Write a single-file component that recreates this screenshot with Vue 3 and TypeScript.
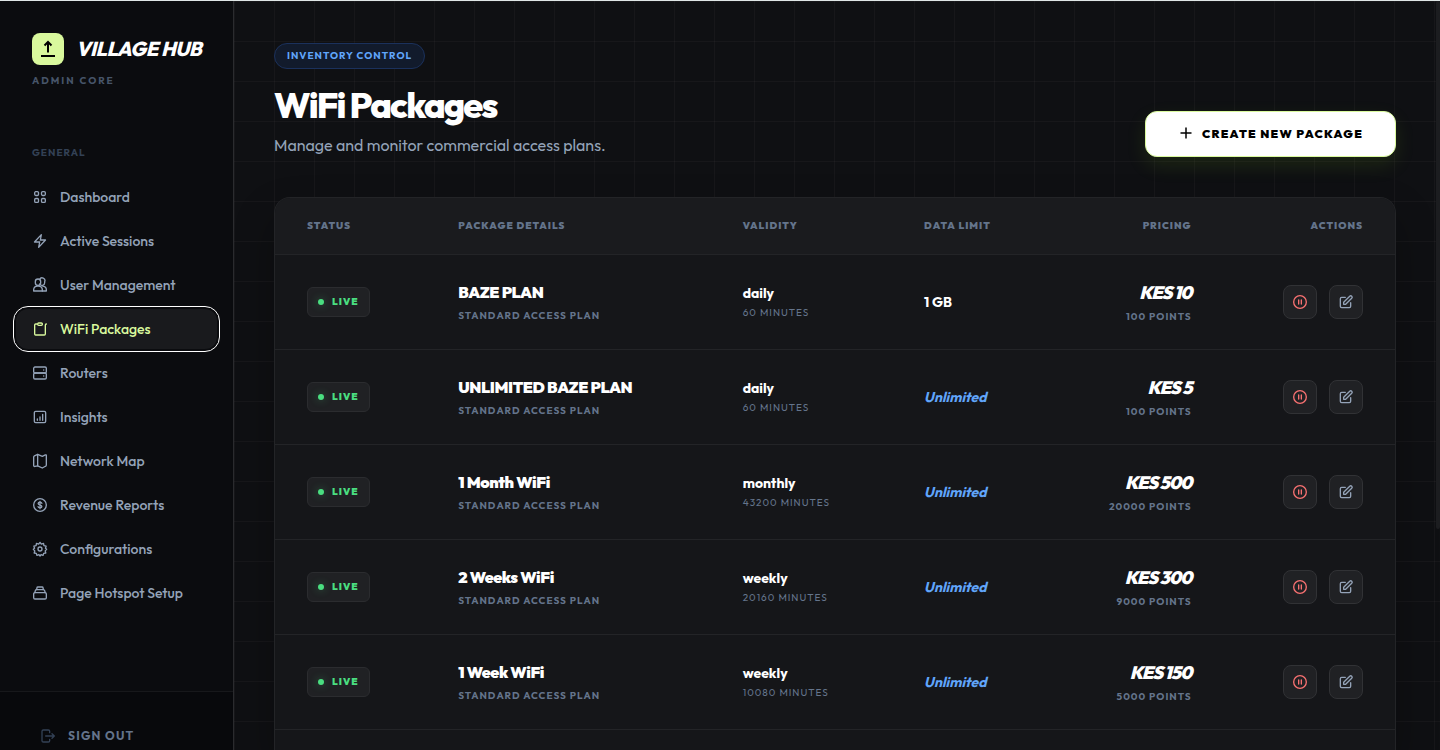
<script setup lang="ts">
interface NavItem {
  label: string
  icon: string[]
  active?: boolean
}

interface Package {
  name: string
  validity: string
  minutes: number
  limit: string | null
  price: number
  points: number
}

const navItems: NavItem[] = [
  {
    label: 'Dashboard',
    icon: [
      'M5.25 4H7.75A1.750 1.750 0 0 1 9.750 6V8A1.750 1.750 0 0 1 7.750 9.750H5.750A1.750 1.750 0 0 1 4 8V6A1.750 1.750 0 0 1 5.750 4z',
      'M16 4H18.250A1.750 1.750 0 0 1 20 5.750V8A1.750 1.750 0 0 1 18.250 9.750H16A1.750 1.750 0 0 1 14.250 8V5.750A1.750 1.750 0 0 1 16 4z',
      'M5.750 14.250H8A1.750 1.750 0 0 1 9.750 16V18.250A1.750 1.750 0 0 1 8 20H5.750A1.750 1.750 0 0 1 4 18.250V16A1.750 1.750 0 0 1 5.750 14.250z',
      'M16 14.250H18.250A1.750 1.750 0 0 1 20 16V18.250A1.750 1.750 0 0 1 18.250 20H16A1.750 1.750 0 0 1 14.250 18.250V16A1.750 1.750 0 0 1 16 14.250z',
    ],
  },
  {
    label: 'Active Sessions',
    icon: ['M3.75 13.5 14 2.500 12.500 10.500h7.750L10 21.500 11.500 13.500H3.750z'],
  },
  {
    label: 'User Management',
    icon: [
      'M9 3a4 4 0 0 1 4 4v1.500a4 4 0 0 1-8 0V7a4 4 0 0 1 4-4z',
      'M11.500 3.800A4 4 0 0 1 19 7v1.500a4 4 0 0 1-7.500 2',
      'M2.500 21v-1.800c0-3.200 2.600-5.400 6.500-5.400s6.500 2.200 6.500 5.400V21z',
      'M16 13.800c3.400.4 5.500 2.500 5.500 5.400V21h-6',
    ],
  },
  {
    label: 'WiFi Packages',
    active: true,
    icon: [
      'M7.500 4.500H5.500A1.500 1.500 0 0 0 4 6v13.500A1.500 1.500 0 0 0 5.500 21h13a1.500 1.500 0 0 0 1.500-1.500V6.500c0-1.200.4-2 1.500-2',
      'M10 3h4a1.500 1.500 0 0 1 1.500 1.500v.5A1.500 1.500 0 0 1 14 6.500h-4A1.500 1.500 0 0 1 8.500 5v-.5A1.500 1.500 0 0 1 10 3z',
    ],
  },
  {
    label: 'Routers',
    icon: [
      'M4.500 3h15a2 2 0 0 1 2 2v5a2 2 0 0 1-2 2h-15a2 2 0 0 1-2-2V5a2 2 0 0 1 2-2z',
      'M4.500 12h15a2 2 0 0 1 2 2v5a2 2 0 0 1-2 2h-15a2 2 0 0 1-2-2v-5a2 2 0 0 1 2-2z',
      'M17.500 7.500h.1M17.500 16.500h.1',
    ],
  },
  {
    label: 'Insights',
    icon: [
      'M5.500 3.500h13a2 2 0 0 1 2 2v13a2 2 0 0 1-2 2h-13a2 2 0 0 1-2-2v-13a2 2 0 0 1 2-2z',
      'M8 15v2M12 12V17M16 8V17',
    ],
  },
  {
    label: 'Network Map',
    icon: [
      'M8.500 2v17',
      'M8.500 2l7 3 4.500-2.200c.8-.3 1.500.1 1.500.9v14.300a2 2 0 0 1-1.400 1.900L15.500 22.500l-7-3.300-4 1c-1.200.3-2-.4-2-1.500V6a2 2 0 0 1 1.200-1.800z',
    ],
  },
  {
    label: 'Revenue Reports',
    icon: [
      'M21.500 12a9.500 9.500 0 1 1-19 0 9.500 9.500 0 0 1 19 0z',
      'M14.800 9.500c-.3-1-1.300-1.600-2.800-1.600s-2.800.8-2.800 2c0 3 5.600 1.300 5.600 4.200 0 1.200-1.200 2-2.800 2-1.500 0-2.600-.6-2.900-1.700M12 6.500v11',
    ],
  },
  {
    label: 'Configurations',
    icon: [
      'M12 2l2 2.700 3.300-1 .6 3.300 3.300.7-1 3.200L22 12.500l-2.200 2.300.9 3.200-3.200.5-.9 3.100-3-1.300L12 22.500l-1.600-2.200-3 1.300-.9-3.100-3.200-.5.9-3.200L2 12.500l1.800-1.600-1-3.200L6.100 7l.6-3.300 3.300 1z',
      'M12 9a3 3 0 1 1 0 6 3 3 0 0 1 0-6z',
    ],
  },
  {
    label: 'Page Hotspot Setup',
    icon: [
      'M4.500 11.500h15a2 2 0 0 1 2 2V19a2 2 0 0 1-2 2h-15a2 2 0 0 1-2-2v-5.500a2 2 0 0 1 2-2z',
      'M4.200 11.500l.8-3A2 2 0 0 1 7 7h10a2 2 0 0 1 2 1.500l.8 3',
      'M7 7l.4-2.700A1.500 1.500 0 0 1 8.900 3h6.200a1.500 1.500 0 0 1 1.500 1.300L17 7',
    ],
  },
]

const packages: Package[] = [
  { name: 'BAZE PLAN', validity: 'daily', minutes: 60, limit: '1 GB', price: 10, points: 100 },
  { name: 'UNLIMITED BAZE PLAN', validity: 'daily', minutes: 60, limit: null, price: 5, points: 100 },
  { name: '1 Month WiFi', validity: 'monthly', minutes: 43200, limit: null, price: 500, points: 20000 },
  { name: '2 Weeks WiFi', validity: 'weekly', minutes: 20160, limit: null, price: 300, points: 9000 },
  { name: '1 Week WiFi', validity: 'weekly', minutes: 10080, limit: null, price: 150, points: 5000 },
]
</script>

<template>
  <div class="shell">
    <aside class="sidebar">
      <div class="brand">
        <div class="brand-row">
          <span class="logo">
            <svg viewBox="0 0 20 20" width="20" height="20" aria-hidden="true">
              <path d="M10 13.500V3.500M6.500 6.500 10 3l3.500 3.500M3 17h14" />
            </svg>
          </span>
          <span class="brand-name">VILLAGE HUB</span>
        </div>
        <div class="brand-sub">ADMIN CORE</div>
      </div>

      <nav class="nav">
        <div class="nav-title">GENERAL</div>
        <a v-for="item in navItems" :key="item.label" href="#" class="nav-item" :class="{ active: item.active }">
          <svg class="icon" viewBox="0 0 24 24" aria-hidden="true">
            <path v-for="d in item.icon" :key="d" :d="d" />
          </svg>
          {{ item.label }}
        </a>
      </nav>

      <div class="sidebar-foot">
        <button type="button" class="sign-out">
          <svg class="icon" viewBox="0 0 24 24" aria-hidden="true">
            <path d="M14.500 7V5a2 2 0 0 0-2-2H5a2 2 0 0 0-2 2v14a2 2 0 0 0 2 2h7.500a2 2 0 0 0 2-2v-2M8.500 12h13M18 8.500l3.500 3.500-3.500 3.500" />
          </svg>
          SIGN OUT
        </button>
      </div>
    </aside>

    <main class="main">
      <header class="page-head">
        <div class="intro">
          <span class="pill">INVENTORY CONTROL</span>
          <h1>WiFi Packages</h1>
          <p>Manage and monitor commercial access plans.</p>
        </div>
        <button type="button" class="create">
          <svg viewBox="0 0 16 16" width="16" height="16" aria-hidden="true"><path d="M8 2.500v11M2.500 8h11" /></svg>
          CREATE NEW PACKAGE
        </button>
      </header>

      <section class="card">
        <table>
          <colgroup>
            <col class="c-status" />
            <col class="c-name" />
            <col class="c-validity" />
            <col class="c-limit" />
            <col class="c-price" />
            <col class="c-actions" />
          </colgroup>
          <thead>
            <tr>
              <th>STATUS</th>
              <th>PACKAGE DETAILS</th>
              <th>VALIDITY</th>
              <th>DATA LIMIT</th>
              <th class="right">PRICING</th>
              <th class="right">ACTIONS</th>
            </tr>
          </thead>
          <tbody>
            <tr v-for="p in packages" :key="p.name">
              <td><span class="live"><i class="dot"></i>LIVE</span></td>
              <td>
                <div class="name">{{ p.name }}</div>
                <div class="meta bold">STANDARD ACCESS PLAN</div>
              </td>
              <td>
                <div class="validity">{{ p.validity }}</div>
                <div class="meta tight">{{ p.minutes }} MINUTES</div>
              </td>
              <td>
                <div v-if="p.limit" class="limit">{{ p.limit }}</div>
                <div v-else class="limit unlimited">Unlimited</div>
              </td>
              <td class="right">
                <div class="price">KES {{ p.price }}</div>
                <div class="meta bold tight">{{ p.points }} POINTS</div>
              </td>
              <td>
                <div class="actions">
                  <button type="button" class="act pause" aria-label="Pause">
                    <svg class="icon" viewBox="0 0 24 24" aria-hidden="true">
                      <circle cx="12" cy="12" r="9.500" />
                      <path d="M10 9v6M14 9v6" />
                    </svg>
                  </button>
                  <button type="button" class="act" aria-label="Edit">
                    <svg class="icon" viewBox="0 0 24 24" aria-hidden="true">
                      <path d="M11 5H5.500a2 2 0 0 0-2 2v11.500a2 2 0 0 0 2 2H17a2 2 0 0 0 2-2V13M8.500 15.500v-3L17.600 3.400a2.100 2.100 0 0 1 3 3L11.500 15.500z" />
                    </svg>
                  </button>
                </div>
              </td>
            </tr>
          </tbody>
        </table>
      </section>
      <div class="scroll-thumb"></div>
    </main>
  </div>
</template>

<style>
body {
  margin: 0;
  background: #0f1013;
}
</style>

<style scoped>
* {
  box-sizing: border-box;
}

.shell {
  display: flex;
  height: 100vh;
  overflow: hidden;
  border-top: 1px solid #dfe6e6;
  background: #0f1013;
  color: #fff;
  font-family: Outfit, Lato, "Liberation Sans", sans-serif;
}

button {
  font-family: inherit;
  cursor: pointer;
}

.icon {
  width: 16px;
  height: 16px;
  flex: none;
  fill: none;
  stroke: currentColor;
  stroke-width: 2;
  stroke-linecap: round;
  stroke-linejoin: round;
}

.sidebar {
  display: flex;
  flex-direction: column;
  flex: none;
  width: 234px;
  border-right: 1px solid #2b2c2f;
  background: #0b0c0f;
}

.brand {
  padding: 32px 0 0 32px;
}

.brand-row {
  display: flex;
  align-items: center;
  gap: 12px;
  height: 32px;
}

.logo {
  display: grid;
  place-items: center;
  width: 32px;
  height: 32px;
  border-radius: 8px;
  background: #d9f99d;
}

.logo svg {
  fill: none;
  stroke: #000;
  stroke-width: 2;
}

.brand-name {
  font-size: 20px;
  font-weight: 800;
  font-style: italic;
  line-height: 28px;
  letter-spacing: -0.025em;
  white-space: nowrap;
}

.brand-sub {
  margin-top: 8px;
  color: #475569;
  font-size: 10px;
  font-weight: 700;
  line-height: 15px;
  letter-spacing: 2px;
}

.nav {
  display: flex;
  flex-direction: column;
  flex: 1;
  gap: 4px;
  padding: 57px 16px 0;
}

.nav-title {
  padding: 0 16px;
  margin-bottom: 12px;
  color: #334155;
  font-size: 10px;
  font-weight: 700;
  line-height: 16px;
  letter-spacing: 1px;
}

.nav-item {
  display: flex;
  align-items: center;
  gap: 12px;
  height: 40px;
  padding: 0 16px;
  border-radius: 12px;
  color: #94a3b8;
  font-size: 14px;
  font-weight: 500;
  text-decoration: none;
  white-space: nowrap;
}

.nav-item.active {
  background: #191a1d;
  color: #d9f99d;
  outline: 1px solid #fff;
  outline-offset: 2px;
}

.sidebar-foot {
  border-top: 1px solid #17181b;
  padding: 36px 40px 6px;
  background: #08090c;
}

.sign-out {
  display: flex;
  align-items: center;
  gap: 12px;
  padding: 0;
  border: 0;
  background: none;
  color: #64748b;
  font-size: 12px;
  font-weight: 700;
  line-height: 16px;
  letter-spacing: 0.1em;
}

.sign-out .icon {
  color: #334155;
}

.main {
  position: relative;
  display: flex;
  flex: 1;
  flex-direction: column;
  min-width: 0;
  padding: 42px 44px 0 40px;
  background-image:
    linear-gradient(rgba(255, 255, 255, 0.03) 1px, transparent 1px),
    linear-gradient(90deg, rgba(255, 255, 255, 0.03) 1px, transparent 1px);
  background-size: 40px 40px;
}

.scroll-thumb {
  position: absolute;
  top: 0;
  right: 0;
  width: 4px;
  height: 70.5%;
  border-radius: 2px;
  background: #1c1d20;
}

.page-head {
  display: flex;
  align-items: flex-end;
  justify-content: space-between;
  margin-bottom: 40px;
}

.intro {
  display: flex;
  flex-direction: column;
  align-items: flex-start;
}

.pill {
  padding: 0 12px;
  border: 1px solid #1b315c;
  border-radius: 13px;
  background: #121b2c;
  color: #60a5fa;
  font-size: 10px;
  font-weight: 700;
  line-height: 24px;
  letter-spacing: 1px;
}

h1 {
  margin: 16px 0 8px;
  font-size: 36px;
  font-weight: 800;
  line-height: 40px;
  letter-spacing: -0.05em;
}

p {
  margin: 0;
  color: #94a3b8;
  font-size: 16px;
  line-height: 24px;
}

.create {
  display: flex;
  align-items: center;
  justify-content: center;
  gap: 8px;
  height: 46px;
  padding: 0 32px 2px;
  border: 1px solid #d9f99d;
  border-radius: 12px;
  background: #fff;
  box-shadow: 0 8px 20px rgba(132, 204, 22, 0.12);
  color: #000;
  font-size: 12px;
  font-weight: 900;
  letter-spacing: 0.1em;
  white-space: nowrap;
}

.create svg {
  fill: none;
  stroke: #000;
  stroke-width: 1.5;
}

.card {
  flex: 1;
  overflow: hidden;
  border: 1px solid #232427;
  border-bottom: 0;
  border-radius: 16px 16px 0 0;
  background: #151619;
  box-shadow: 0 20px 40px rgba(0, 0, 0, 0.3);
}

table {
  width: 100%;
  border-collapse: separate;
  border-spacing: 0;
  table-layout: fixed;
}

.c-status { width: 13.5%; }
.c-name { width: 25.4%; }
.c-validity { width: 16.2%; }
.c-limit { width: 14.5%; }
.c-price { width: 15.1%; }
.c-actions { width: 15.3%; }

th {
  height: 57px;
  padding: 0 32px 2px;
  border-bottom: 1px solid #232427;
  background: #1a1b1e;
  color: #64748b;
  font-size: 10px;
  font-weight: 900;
  letter-spacing: 1px;
  text-align: left;
  white-space: nowrap;
}

td {
  height: 95px;
  padding: 0 32px;
  border-bottom: 1px solid #232427;
  white-space: nowrap;
}

.right {
  text-align: right;
}

.live {
  display: inline-flex;
  align-items: center;
  gap: 8px;
  height: 30px;
  padding: 0 10px;
  border: 1px solid #2b2c2f;
  border-radius: 6px;
  background: #202124;
  color: #4ade80;
  font-size: 10px;
  font-weight: 900;
  line-height: 14px;
  letter-spacing: 1px;
}

.dot {
  width: 6px;
  height: 6px;
  border-radius: 50%;
  background: #4ade80;
  box-shadow: 0 0 8px rgba(74, 222, 128, 0.4);
}

.name {
  font-size: 16px;
  font-weight: 900;
  line-height: 24px;
  letter-spacing: -0.025em;
}

.meta {
  margin-top: 4px;
  color: #64748b;
  font-size: 10px;
  line-height: 16px;
  letter-spacing: 1px;
}

.meta.bold {
  font-weight: 700;
}

.meta.tight {
  margin-top: 2px;
}

.validity,
.limit {
  font-size: 14px;
  font-weight: 700;
  line-height: 20px;
}

.unlimited {
  color: #60a5fa;
  font-style: italic;
}

.price {
  font-size: 18px;
  font-weight: 900;
  font-style: italic;
  line-height: 28px;
  letter-spacing: -0.05em;
}

.actions {
  display: flex;
  justify-content: flex-end;
  gap: 12px;
}

.act {
  display: grid;
  place-items: center;
  width: 34px;
  height: 34px;
  padding: 0;
  border: 1px solid #313235;
  border-radius: 8px;
  background: #202124;
  color: #94a3b8;
}

.pause {
  color: #f87171;
}
</style>
